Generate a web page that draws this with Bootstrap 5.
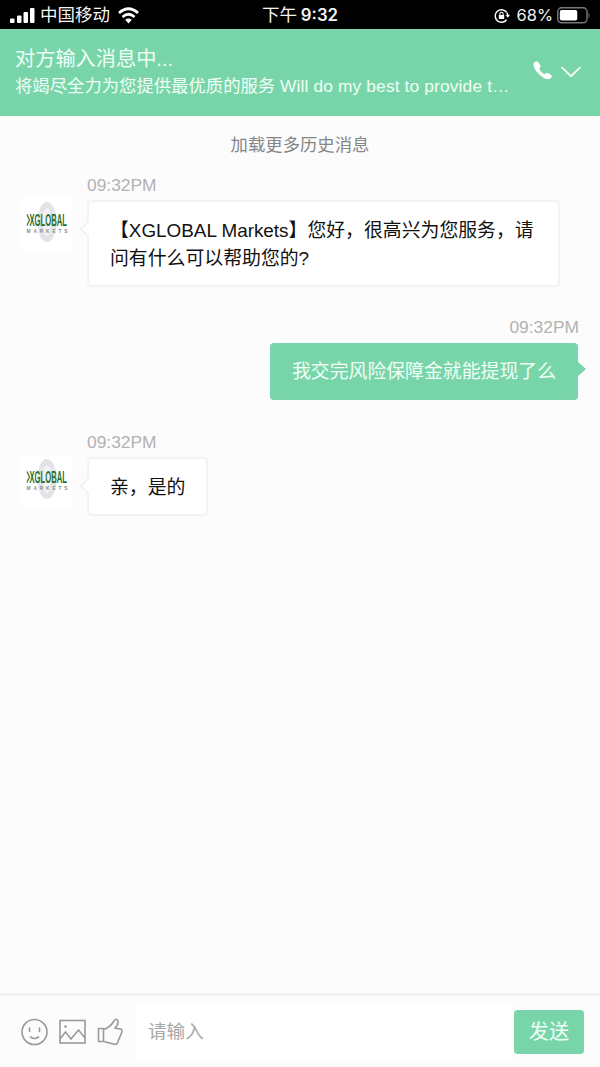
<!DOCTYPE html>
<html lang="zh-CN">
<head>
<meta charset="utf-8">
<meta name="viewport" content="width=device-width, initial-scale=1">
<title>XGLOBAL Markets</title>
<link href="https://cdn.jsdelivr.net/npm/bootstrap@5.3.0/dist/css/bootstrap.min.css" rel="stylesheet">
<style>
  body { font-family: "Liberation Sans", "Noto Sans CJK SC", sans-serif; background: #fcfcfc; color: #111; font-size: 18.86px; line-height: 27.5px; }
  svg { display: block; flex: none; }
  .status-bar { height: 29px; background: #000; color: #f4f4f4; font-size: 17.5px; line-height: 29px; display: grid; grid-template-columns: 1fr auto 1fr; padding: 1px 10px 0; flex: none; }
  .clock b { font-size: 16.8px; font-family: Inter, sans-serif; font-weight: 600; margin-left: -1px; }
  .percent { font-family: Inter, sans-serif; font-size: 16.4px; margin-left: 7px; }
  .chat-head { height: 87px; background: #78d5a9; color: #effff6; padding: 16px 18px 0 15px; flex: none; }
  .chat-title { font-size: 20.2px; line-height: 28px; }
  .chat-sub { font-size: 17.35px; line-height: 26px; }
  .chat-sub span { letter-spacing: .14px; }
  .history { font-size: 17.35px; line-height: 26px; color: #858585; padding-top: 16px; }
  .stamp { font-size: 17.4px; line-height: 20px; color: #b2b2b2; }
  .stamp-in { margin-left: -1px; }
  .avatar { width: 52px; height: 52px; background: #fff; margin-top: 23px; }
  .bubble { position: relative; border-radius: 4px; width: fit-content; }
  .bubble-in { background: #fff; border: 2px solid #f3f3f3; padding: 15px 21px 13px; margin: 5px 0 0 -1px; }
  .bubble-wide { width: 473px; }
  .bubble-in::before { content: ""; position: absolute; left: -7px; top: 21px; width: 12px; height: 12px; background: #fff; border: solid #f3f3f3; border-width: 0 0 2px 2px; transform: rotate(45deg); }
  .bubble-out { background: #78d5a9; color: #effff6; margin: 6px 1px 0 0; padding: 15px 22px 14px; }
  .bubble-out::after { content: ""; position: absolute; right: -8px; top: 18px; border: solid transparent; border-width: 8px 0 8px 9px; border-left-color: #78d5a9; }
  .reply { margin: 30px 21px 0 0; }
  .row-in { padding-left: 20px; }
  .first-in { margin-top: 17px; }
  .next-in { margin-top: 32px; }
  .composer { height: 74px; border-top: 3px solid #f0f0f0; padding: 0 16px 0 21px; flex: none; }
  .tools { gap: 11px; }
  .entry { background: #fff; border: 0; border-radius: 5px; height: 56px; padding: 1px 13px 0; font-size: 18.6px; outline: 0; min-width: 0; margin-left: 11px; }
  .entry::placeholder { color: #a8a8a8; opacity: 1; }
  .send { width: 70px; height: 44px; padding: 2px 0 0; border-radius: 4px; background: #78d5a9; color: #effff6; font-size: 20.2px; border: 0; }
</style>
</head>
<body>
<svg class="d-none" aria-hidden="true">
  <symbol id="logo" viewBox="0 0 52 52">
    <ellipse cx="27" cy="24" rx="9.500" ry="20" fill="#e2e2e7"/>
    <ellipse cx="27" cy="24" rx="4" ry="14" fill="#f4f4f7"/>
    <path d="M18 14h18M18 35h18" stroke="#f2f2f5"/>
    <path d="M7 16.500l2.500 5.500-2.500 5.500" fill="none" stroke="#397b3f" stroke-width="1.300"/>
    <text transform="translate(9.500 28) scale(.58 1)" font-family="Liberation Sans" font-weight="700" font-size="16.500" textLength="64.500" lengthAdjust="spacingAndGlyphs" fill="#28712f">XGLOBAL</text>
    <text x="6.500" y="34.500" font-family="Liberation Sans" font-weight="700" font-size="4.800" textLength="41" fill="#85918a">MARKETS</text>
  </symbol>
</svg>
<div class="d-flex flex-column vh-100 overflow-hidden">
  <div class="status-bar">
    <div class="d-flex align-items-center">
      <svg width="26" height="16" viewBox="0 0 26 16" fill="#fff"><rect x="0" y="10.500" width="4.500" height="4.500" rx="1"/><rect x="7" y="7.500" width="4.500" height="7.500" rx="1"/><rect x="13.500" y="4" width="4.500" height="11" rx="1"/><rect x="20" y="0" width="4.500" height="15" rx="1"/></svg>
      <span class="ms-1">中国移动</span>
      <svg class="ms-2" width="21" height="18" viewBox="0 0 22 18" fill="none" stroke="#fff" stroke-width="2.800" preserveAspectRatio="none"><path d="M1 6Q11-2.500 21 6M4.700 10Q11 4.500 17.300 10"/><path d="M11 16.500l-3.500-3.700q3.500-2.800 7 0z" fill="#fff" stroke="none"/></svg>
    </div>
    <div class="clock">下午 <b>9:32</b></div>
    <div class="d-flex align-items-center justify-content-end">
      <svg width="16" height="16" viewBox="0 0 16 16" fill="none" stroke="#fff" stroke-width="1.500"><path d="M12.600 4.300A6.300 6.300 0 1 0 12.600 11.700"/><path d="M12.600 4.300Q13.600 5.500 13.700 7" stroke-width="1.300"/><path d="M11.500 6.700h4.500l-2.200 3z" fill="#fff" stroke="none"/><rect x="4.800" y="7" width="5.400" height="4" fill="#fff" stroke="none"/><path d="M5.900 7V5.800a1.600 1.600 0 0 1 3.200 0V7" stroke-width="1.100"/></svg>
      <span class="percent me-1">68%</span>
      <svg width="33" height="17" viewBox="0 0 35 17" preserveAspectRatio="none"><rect x=".8" y=".8" width="31" height="15" rx="4" fill="none" stroke="#777" stroke-width="1.500"/><rect x="3" y="3" width="18.500" height="10.600" rx="2" fill="#fff"/><path d="M33.500 5.500q2 3 0 6z" fill="#777"/></svg>
    </div>
  </div>

  <header class="chat-head d-flex justify-content-between">
    <div>
      <div class="chat-title">对方输入消息中...</div>
      <div class="chat-sub text-nowrap">将竭尽全力为您提供最优质的服务 <span>Will do my best to provide t…</span></div>
    </div>
    <div class="d-flex gap-2 pt-3">
      <svg width="20" height="20" viewBox="0 0 20 20" fill="#fff"><path d="M1 1.800Q3.500-1 5.300 1L7.500 4.500Q8 6.200 6 7.700Q8 11.500 11.300 13.300Q13.500 11.200 15 11.900L18.300 14.200Q19.800 16 17 17.800Q13.500 19.500 7.700 14.700Q1.800 9.700.6 5Q.2 3 1 1.800z"/></svg>
      <svg width="21" height="20" viewBox="0 0 21 20" fill="none" stroke="#fff" stroke-width="1.700" stroke-linecap="round"><path d="M1 6.500l9 8.700 9-8.700"/></svg>
    </div>
  </header>

  <main class="flex-grow-1">
    <div class="history text-center">加载更多历史消息</div>
    <div class="d-flex row-in first-in">
      <svg class="avatar"><use href="#logo"/></svg>
      <div class="ms-3">
        <div class="stamp stamp-in">09:32PM</div>
        <div class="bubble bubble-in bubble-wide">【XGLOBAL Markets】您好，很高兴为您服务，请<br>问有什么可以帮助您的?</div>
      </div>
    </div>
    <div class="d-flex flex-column align-items-end reply">
      <div class="stamp">09:32PM</div>
      <div class="bubble bubble-out">我交完风险保障金就能提现了么</div>
    </div>
    <div class="d-flex row-in next-in">
      <svg class="avatar"><use href="#logo"/></svg>
      <div class="ms-3">
        <div class="stamp stamp-in">09:32PM</div>
        <div class="bubble bubble-in">亲，是的</div>
      </div>
    </div>
  </main>

  <footer class="composer d-flex align-items-center">
    <div class="d-flex tools">
      <svg width="27" height="28" viewBox="0 0 27 28" fill="none" stroke="#999" stroke-width="1.600" stroke-linecap="round"><circle cx="13.500" cy="14" r="12.500"/><path d="M8.500 10v3.500M18.500 10v3.500M9.500 19q4 3 8 0"/></svg>
      <svg width="27" height="28" viewBox="0 0 27 28" fill="none" stroke="#999" stroke-width="1.600"><rect x="1" y="2.500" width="25" height="22.500"/><path d="M1 21l5.500-7 5.500 7 7.500-9 6.500 8"/><circle cx="6.500" cy="8.500" r="1.300" fill="#999" stroke="none"/></svg>
      <svg width="27" height="28" viewBox="0 0 27 28" fill="none" stroke="#999" stroke-width="1.600" stroke-linejoin="round"><path d="M1.500 10.500h5v13h-5zM6.500 11.500Q13 9.500 17 3q2.500-3.500 4 .3Q21.500 6 18 10.300l6 .7q1.500.8 1 2.800l-4.500 11q-1 2-3 1.500L6.500 23.500"/></svg>
    </div>
    <input class="entry flex-grow-1" type="text" placeholder="请输入">
    <button class="btn send" type="button">发送</button>
  </footer>
</div>
<script src="https://cdn.jsdelivr.net/npm/bootstrap@5.3.0/dist/js/bootstrap.bundle.min.js"></script>
</body>
</html>
